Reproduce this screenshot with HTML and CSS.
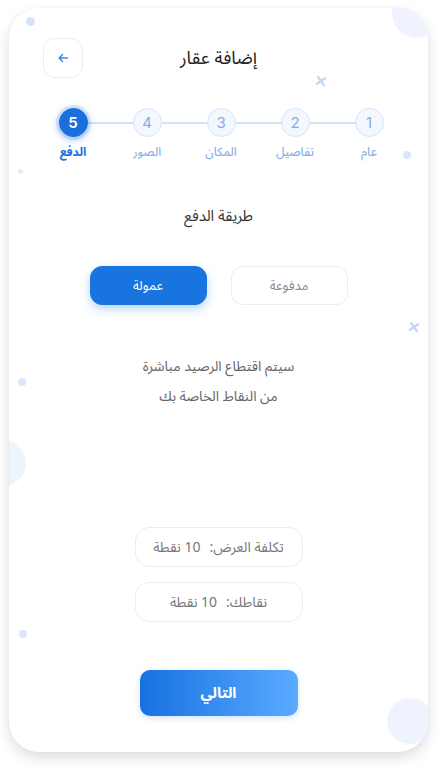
FILE: index.html
```html
<!DOCTYPE html>
<html lang="ar" dir="rtl">
<head>
<meta charset="utf-8">
<title>إضافة عقار</title>
<link rel="stylesheet" href="styles.css">
</head>
<body>
<div class="card">
  <span class="deco dot d1"></span>
  <span class="deco blob b1"></span>
  <svg class="deco star s1" viewBox="0 0 12 12"><path d="M2.5 2.5 L9.5 9.5 M9.5 2.5 L2.5 9.5"/></svg>
  <span class="deco dot d2"></span>
  <span class="deco dot d3"></span>
  <svg class="deco star s2" viewBox="0 0 12 12"><path d="M2.5 2.5 L9.5 9.5 M9.5 2.5 L2.5 9.5"/></svg>
  <span class="deco dot d4"></span>
  <span class="deco blob b2"></span>
  <span class="deco dot d5"></span>
  <span class="deco blob b3"></span>

  <header class="header">
    <span class="spacer"></span>
    <h1 class="title">إضافة عقار</h1>
    <button class="back" aria-label="رجوع">
      <svg viewBox="0 0 16 16" width="14" height="14"><path d="M13 8 H3.5 M7.5 4 L3.5 8 L7.5 12" fill="none" stroke="#3b86f0" stroke-width="1.6" stroke-linecap="round" stroke-linejoin="round"/></svg>
    </button>
  </header>

  <ol class="steps">
    <li class="step"><span class="num">1</span><span class="lbl">عام</span></li>
    <li class="step"><span class="num">2</span><span class="lbl">تفاصيل</span></li>
    <li class="step"><span class="num">3</span><span class="lbl">المكان</span></li>
    <li class="step"><span class="num">4</span><span class="lbl">الصور</span></li>
    <li class="step active"><span class="num">5</span><span class="lbl">الدفع</span></li>
  </ol>

  <h2 class="section">طريقة الدفع</h2>

  <div class="choices">
    <button class="choice">مدفوعة</button>
    <button class="choice on">عمولة</button>
  </div>

  <p class="desc">سيتم اقتطاع الرصيد مباشرة<br>من النقاط الخاصة بك</p>

  <div class="info">
    <div class="box"><span>تكلفة العرض:</span><span class="val">10 نقطة</span></div>
    <div class="box"><span>نقاطك:</span><span class="val">10 نقطة</span></div>
  </div>

  <button class="next">التالي</button>
</div>
</body>
</html>
```
FILE: styles.css
```css
* { box-sizing: border-box; }
html, body { margin: 0; padding: 0; background: #ffffff; }
body {
  font-family: "Noto Sans Arabic", "Noto Sans", "DejaVu Sans", sans-serif;
  padding: 8px 15px 16px 9px;
}
.card {
  position: relative;
  width: 419px;
  height: 744px;
  background: #ffffff;
  border-radius: 30px;
  box-shadow: 0 6px 14px rgba(0,0,0,0.13), 0 0 3px rgba(0,0,0,0.05);
  overflow: hidden;
  padding-top: 30px;
}
.deco { position: absolute; display: block; }
.dot { border-radius: 50%; background: #d6e2fb; }
.d1 { width: 9px; height: 9px; left: 17px; top: 9px; }
.d2 { width: 8px; height: 8px; left: 394px; top: 143px; background: #dbe5fb; }
.d3 { width: 5px; height: 5px; left: 9px; top: 161px; background: #e3ebfc; }
.d4 { width: 8px; height: 8px; left: 9px; top: 370px; background: #dbe5fb; }
.d5 { width: 8px; height: 8px; left: 10px; top: 622px; background: #dbe5fb; }
.blob { border-radius: 50%; background: #eef3fe; }
.b1 { width: 50px; height: 50px; left: 383px; top: -20px; }
.b2 { width: 46px; height: 46px; left: -29px; top: 432px; }
.b3 { width: 46px; height: 46px; left: 378px; top: 690px; }
.star { width: 12px; height: 12px; fill: none; stroke: #c5d6f8; stroke-width: 2.4; stroke-linecap: round; }
.s1 { left: 306px; top: 67px; transform: rotate(10deg); }
.s2 { left: 399px; top: 313px; transform: rotate(10deg); }

.header {
  position: relative;
  display: grid;
  grid-template-columns: 40px 1fr 40px;
  align-items: center;
  padding: 0 34px;
  height: 40px;
}
.title {
  margin: 0;
  text-align: center;
  font-size: 18px;
  font-weight: 400;
  color: #222;
}
.back {
  width: 40px; height: 40px;
  border: 1px solid #ececec;
  border-radius: 12px;
  background: #fff;
  display: flex; align-items: center; justify-content: center;
  padding: 0;
}

.steps {
  position: relative;
  list-style: none;
  display: flex;
  margin: 30px 22px 0 27px;
  padding: 0;
}
.step {
  position: relative;
  width: 74px;
  display: flex;
  flex-direction: column;
  align-items: center;
}
.step:not(:last-child)::before {
  content: "";
  position: absolute;
  top: 14px;
  right: 50%;
  width: 74px;
  height: 2px;
  background: #d2e2fb;
}
.num {
  position: relative;
  width: 29px; height: 29px;
  border-radius: 50%;
  border: 1.5px solid #d5e4fb;
  background: #f3f7fe;
  color: #86ade8;
  font-family: "Inter", "Lato", sans-serif;
  font-size: 15px;
  display: flex; align-items: center; justify-content: center;
}
.active .num {
  background: #1a6fdc;
  border-color: #1a6fdc;
  color: #fff;
  font-weight: 600;
  box-shadow: 0 0 0 3px rgba(26,111,220,0.12), 0 2px 8px rgba(26,111,220,0.45);
}
.lbl {
  margin-top: 7px;
  font-size: 12px;
  font-weight: 500;
  color: #8db2ea;
  line-height: 18px;
}
.active .lbl { color: #1a6fdc; font-weight: 700; }

.section {
  margin: 42px 0 0;
  text-align: center;
  font-size: 15px;
  font-weight: 400;
  color: #333;
  line-height: 24px;
}

.choices {
  display: flex;
  justify-content: center;
  gap: 24px;
  margin-top: 38px;
}
.choice {
  width: 117px; height: 39px;
  border-radius: 12px;
  border: 1px solid #ececec;
  background: #fff;
  color: #888;
  font-family: inherit;
  font-size: 13px;
}
.choice.on {
  background: #1875e0;
  border-color: #1875e0;
  color: #fff;
  font-weight: 400;
  box-shadow: 0 4px 10px rgba(24,117,224,0.3);
}

.desc {
  margin: 47px 0 0;
  text-align: center;
  font-size: 14px;
  line-height: 30px;
  color: #666;
}

.info {
  display: flex;
  flex-direction: column;
  align-items: center;
  gap: 15px;
  margin-top: 115px;
}
.box {
  width: 168px; height: 40px;
  border: 1px solid #ececec;
  border-radius: 14px;
  display: flex; align-items: center; justify-content: center;
  font-size: 14px;
  color: #777;
}
.val { margin-right: 9px; }

.next {
  display: block;
  margin: 48px auto 0;
  width: 158px; height: 46px;
  border: 0;
  border-radius: 10px;
  background: linear-gradient(90deg, #1772e0 0%, #5aaaff 100%);
  color: #fff;
  font-family: inherit;
  font-size: 15px;
  font-weight: 700;
  box-shadow: 0 2px 6px rgba(24,117,224,0.2);
}
```
